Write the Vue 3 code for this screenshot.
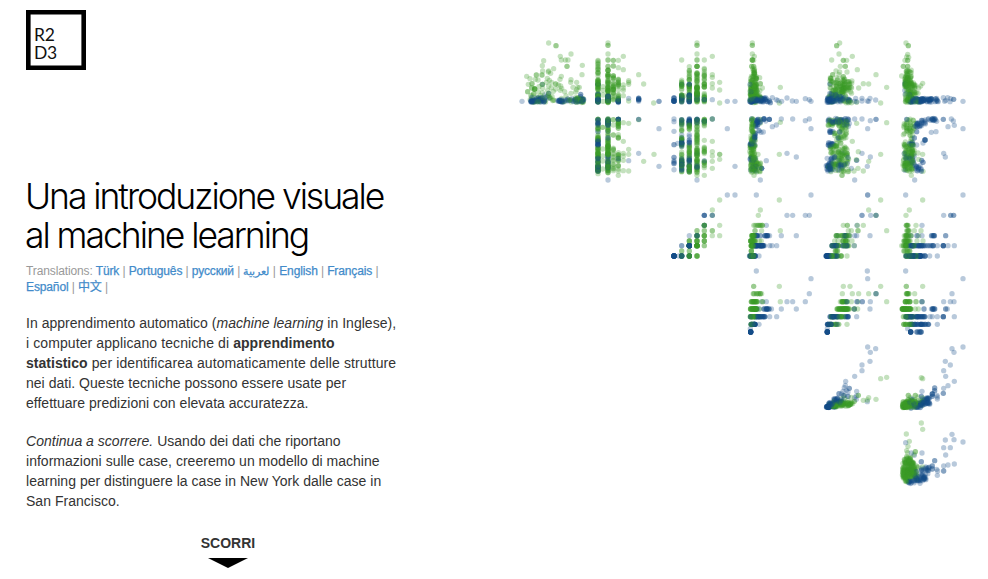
<script setup>
// Each plot lists its dots in thirds of a pixel, relative to the origin.
const plots = [
  // row 1
  { o: [510, 30], g: '116,39 138,47,2 183,72 151,79 154,90 166,90 174,90 171,109,2 101,92 97,107 217,106 216,134 116,123 122,130 131,116 115,126 98,123 79,135,2 96,135,2 154,139 150,148 50,139 60,146 76,148 84,150 112,145 118,151 109,157 125,157 183,149 182,157 200,157 66,161,3 55,163 97,163,3 87,170 98,174 116,168 124,173 137,162,2 145,165 152,168 155,175 74,177,5 65,174,2 53,185,2 113,181 116,190,2 130,184 137,177 151,181 164,185 189,172 203,172 208,172 200,179 197,186 183,190 168,198 71,191,2 85,186 97,188 92,196 126,199 62:140:194:206:9 60:135:209:217:12 195:222:203:218:22 150:190:205:218:5',
    b: '36,214 97,163 116,190 104,195 108,201 117,204 61:73:211:216:15 68:106:202:216:26 142:160:209:216:15 162:190:205:215:9 194:222:206:216:24 212,193,2 212,200,2 173,207 66,202 96,204,2' },
  { o: [510, 30], g: '294,39 294,46,3 294,72 294,90,2 294,109,3 264:264:90:140:12 264:264:145:182:20 264:264:188:218:14 294:294:115:165:18 294:294:168:218:40 279,181 279,170 279,195 279,214 310,91,2 310,108,3 310:310:128:216:22 325,91 325,113 325:325:130:215:16 340,79 340,119 340,165 340,174 340,181 340,197 356,152 356,157 356,163 356,213 386,134 401,162 431,219',
    b: '264,163,4 264:264:187:196:4 264:264:206:216:18 294:294:196:215:23 325:325:204:218:14 356,205 386:386:203:211:6 386,214 447,214,3' },
  { o: [660, 30], g: '65,90 65:65:148:180:10 65:65:190:216:12 88,110 88:88:121:155:9 88:88:162:216:20 111,39 111,46,3 111,72 111,90,2 111,109,5 111:111:124:158:12 111:111:161:218:40 133,90 133:133:115:156:9 133:133:160:174:8 133:133:186:218:10 157,79 157,134 157,142 157,161 157,174 179,157 179,180 179,219 72,197',
    b: '42:42:202:206:3 42,213,10 65,163,3 65:65:197:216:18 88,163,4 88:88:194:217:24 111:111:201:215:6 133:133:204:210:4 157,209 202,214 225,214' },
  { o: [660, 30], g: '277,39 277,46,3 277,72 283,79 277,90,4 281,91 275,109,3 281,109,3 278:284:115:140:12 270:290:137:170:26 299,143 301,161,2 307,174 361,172 358,219 270:292:165:218:68 292:302:180:218:9 269:288:190:206:14',
    b: '270,163 273,185 277,190 269:278:208:217:19 276:312:205:215:27 299:321:202:217:18 323,215,2 328,213,3 331,218,2 337,203 349,209 354,212 365,214 381,204 397,213 409,214 436,206 448,209 453,214' },
  { o: [815, 30], g: '74,39 65,47,2 72,72 112,79 50,90 85,91,2 95,91 76,109 91,109,3 127,119 63,123 74,126 96,126 53,134,2 72,134 85,140,3 183,134 46,143 45,151 145,161 161,162 215,172 131,174 197,219 45:89:143:182:38 80:111:152:174:14 77:112:171:194:18 42:93:181:216:37 89:110:210:219:5 125,217',
    b: '45,162,3 44,190 50,190 35:55:203:217:34 53:91:197:216:25 92:106:207:216:8 119,214 122,205 125,215 141,205 141,213 157,213 161,214 165,205 182,210 45:64:187:204:8' },
  { o: [815, 30], g: '273,39 280,47,3 278,73 275,81 281,82 270,91 278,91,2 265,109,2 278,109,2 273:290:119:143:16 270:292:139:171:32 269:301:155:196:46 260,138 323,160 317,168 311,174 304,188 309,190 269:293:199:218:28 293:322:207:220:7',
    b: '270,162,2 269,181 271,192 284,194 283:305:205:217:24 304:329:205:216:35 332:351:206:216:18 356:370:204:216:7 385,203 398,203 389,214 392,211 405,215 407,206 416,208,2 444,214' },
  // row 2
  { o: [510, 30], g: '264:264:267:302:11 264:264:310:351:11 264:264:354:383:19 264:264:386:426:23 264,431 278,292,3 278,357 278,378 278,393 278,417 294:294:265:309:16 294:294:311:352:19 294:294:354:378:19 294:294:379:429:21 310,269,3 310,285 310,315,2 310:310:354:394:8 310:310:400:423:5 325:325:267:308:11 325:325:312:328:4 325:325:367:396:8 325:325:406:425:4 325,436 340,278 340,334 340,370 340,378 340,391 340,422 356,280 356,358 356,373 356,423 386,269 401,394 432,373',
    b: '264:264:267:286:8 264,305,3 264:264:332:350:12 264:264:379:398:7 264:264:406:424:12 294:294:266:287:18 294,304,2 294,324,2 294:294:375:425:15 294,450 325,268,8 325,386,3 356,392 386,268,3 386,370 447,296 447,409' },
  { o: [660, 30], g: '65:65:265:305:11 65:65:315:351:11 65:65:365:427:22 88:88:276:300:8 88:88:342:385:13 88:88:386:429:15 111:111:267:301:12 111:111:302:351:14 111:111:352:390:18 111:111:391:429:15 111,436 133:133:267:290:9 133,331 133:133:351:371:7 133:133:391:424:7 133,436 157,267 157,334 157,365 157,378 157,394 157,415 179,373,3 179,388',
    b: '42,267 42,275 42,304 42,344,2 42,382,2 42:42:391:422:5 53,340 65:65:266:288:5 65,315 65:65:329:350:14 65:65:380:424:18 88:88:266:287:20 88:88:299:345:7 88:88:375:426:17 111:111:267:282:6 111,370 111:111:401:421:5 111,450 133:133:268:279:5 133,392 157,267,2 202,296 225,409' },
  { o: [660, 30], g: '274:281:266:305:18 273:286:304:350:24 269:284:346:383:27 272:290:381:427:39 301,268 301,279 361,277 358,373 294,373 298,403 300,425 282,436 292:303:385:424:7',
    b: '275,267,2 285:294:268:290:17 292:303:267:278:5 312,267,5 328,268,4 317,273 297,302,2 303,307 310,306 283:287:304:334:9 270:284:338:346:12 270:287:380:396:8 270:291:405:425:15 305,415,4 319,392 301,450 337,290 349,285 364,267 398,267 381,370 409,381 436,272 448,267 453,296' },
  { o: [815, 30], g: '39:60:268:287:12 58:102:266:291:21 125,280 215,278 78:99:292:325:12 54:80:302:349:16 45:70:346:373:17 65:98:350:378:23 55:101:379:402:20 38:102:398:426:27 81,436,2 112,334 130,365 124,389 197,373 161,394 117,423 129,415 145,423',
    b: '38:55:267:280:9 57:87:265:280:14 84:104:266:289:12 119,267 141,267 166,272 183,268,3 158,296 40:56:302:309:6 74,306,2 70,324,2 39:57:338:347:11 35:60:380:402:12 33:48:405:424:18 48:91:403:420:12 73,391 83,370 99,382 97,401 109,415 141,370 166,381 125,391,2 157,409 119,450' },
  { o: [815, 30], g: '265:277:278:316:9 275:300:267:310:20 284:293:312:348:10 260:277:333:351:5 266:300:341:383:32 264:293:371:424:50 303,280 309,369 323,373 289,436 311,388 324,424 295,398',
    b: '275,268,2 307,278 300:320:280:291:12 319:331:268:285:8 338:363:265:272:12 365,274 385,268,3 409,267 415,273 418,286 399,290 444,296 305,305,3 349,307 363,305 298,324,2 330,330,5 324,339 281:295:337:347:7 305,345 268,370 386,370 391,381 269:300:377:403:12 320,391,2 324,397,2 270,421 300:322:406:425:13 299,450' },
  // row 3
  { o: [660, 185], g: '65,198,3 65,213,4 88,168,4 88,182,6 88,198,3 88,213,9 111,137,2 111,152,5 111,168,6 111,182,16 111,213,5 133,121,5 133,137,2 133,152,5 133,168,4 133,182,3 157,75 157,91 157,137,2 157,152 179,45 179,121 179,152',
    b: '42,213,18 57,213 65,182,3 65,213,9 88,152 88,182,19 88,213,4 111,152,4 133,91,4 133,121,2 157,91,2 202,30 225,30' },
  { o: [660, 185], g: '358,45 301,75 295,91 279:310:121:121:9 285,137,3 305,137 361,137 274:284:152:152:15 272:287:168:168:16 298,168 304,168 273:282:182:182:19 274,198,4 270:282:213:213:16',
    b: '289,30 453,30 381,91 398,91 436,91 448,91 319,121 288:304:152:152:7 314:329:152:152:9 364,152 409,152 283:302:182:182:22 302:314:182:182:13 329,182 336,182 350,182 268:287:213:213:17 297,213' },
  { o: [815, 185], g: '197,45 161,75 183,91 85,121 97,121,2 127,121 145,121 100,137 109,137 129,137,2 215,137 63:105:152:152:14 59,168 69,168 82:98:168:168:9 111,168 48:74:182:182:10 78:104:182:182:8 118,182 58:71:198:198:5 45:80:213:213:15 96,213',
    b: '158,30,3 141,91,3 167,91 183,91,2 126,121 66,152 87:95:152:152:7 104,152 119,152 125,152 165,152 48:66:182:182:14 82:98:182:182:9 118,182 33:43:213:213:25 45:70:213:213:10' },
  { o: [815, 185], g: '323,45 283,75 273,91 273:281:121:121:5 303,121 274:283:137:137:5 298,137 318,137 265:289:152:152:10 311,152 263:286:168:168:13 306,168 324,168 260:278:182:182:13 278:300:182:182:7 265:286:198:198:7 266:307:213:213:18',
    b: '272,30 444,30 386,91 407,91,2 416,91,2 321,121 288,152 306,152,2 321,152 349:360:152:152:6 392,152,3 282:321:182:182:23 323:355:182:182:11 367,182 385,182,5 399,182 418,182 269:329:213:213:34 316,213,6 330,213,4 344,213 367,213' },
  // row 4
  { o: [660, 185], g: '358,304 281,304,3 276:306:326:326:9 274:292:350:350:17 308,350,2 361,350 271:292:372:372:30 298,372 270:286:395:395:15 297,395 272:281:418:418:9',
    b: '289,258 453,281 448,326 381,350 398,350 436,350 305,350 319,350 291,372 298,372 312:337:372:372:11 364,372 409,372 272,395,2 284:316:395:395:23 329,395 350,395 272:286:418:418:19 297,418 271,431 272,441,15' },
  { o: [815, 185], g: '85,304 105,304 197,304 82,326 112,326 131,326 161,326 183,326 72:98:350:350:12 109,350 129,350 215,350 65:105:372:372:36 118,372,2 128,372 45:90:395:395:17 41:72:418:418:10 96,418',
    b: '157,258 158,281 183,326,2 95,350,2 126,350,2 142,350,3 166,350 118,372,3 165,372 44:70:395:395:19 71:101:395:395:9 125,395 37:50:418:418:17 66,418,2 37,431 37,441,14' },
  { o: [815, 185], g: '274,304,3 323,304 271:284:326:326:6 299,326 266:287:350:350:11 303,350,2 321,350 261:291:372:372:34 301,372 310,372 264:294:395:395:16 303,395 266:294:418:418:13',
    b: '272,258 444,281 411,326 321,350,3 386,350 406,350 417,350 327,372,3 349:361:372:372:7 392,372,2 397,372 271:300:395:395:18 302:332:395:395:18 345,395 352,395 367,395 385,395,4 418,395 280:328:418:418:25 329:345:418:418:6 367,418 278,431 287,441,9 304:320:441:441:8' },
  // row 5
  { o: [815, 335], g: '215,127 197,131 130,181,3 161,188 145,196 157,195 183,193 109,187 86,182 118,199,3 43:64:208:216:18 55:82:199:215:23 73:101:196:214:27 95:113:201:211:12 89,190 78,192',
    b: '158,36 182,41 166,52 165,79 141,90 141,107 119,124 92,139 91,151 88,158 103,160,3 94,166 99,171 84,169 125,169 72,176,3 80,177 87,182,3 99,184,2 124,183 119,188 124,193 157,200 34:44:214:218:27 40:60:202:216:35 56:70:189:203:15 69:88:192:205:5' },
  { o: [815, 335], g: '319,128 323,131 280,181,2 301,181,2 309,186 323,189 286,187 270:300:193:208:24 264:304:200:218:40 262:285:207:217:36 307:325:194:213:8',
    b: '444,36 411,41 417,52 391,79 406,90 386,107 392,124 418,139 399,152 386,160 359,159,3 359,167,2 321,169 385,175,3 352,177,4 352,184,2 366,181 367,192 289,191 293,193 319,184,3 321:345:187:208:22 279:320:203:218:24 288,219,2 304:332:201:211:17 367,186' },
  // row 6
  { o: [815, 335], g: '319,264 323,283 274,297 283,319 279,334 278,353 301,350,3 297,358 275,364 268,373 285,370 323,396 275,347 267:291:367:390:24 263:298:381:425:78 262:286:399:430:38 294:308:391:434:13 269:287:425:441:9 309,396',
    b: '411,298 417,314 391,315 444,321 272,323 386,338 406,338 321,354 392,360 289,354 298,361 359,377,3 319,380,3 386,393 399,390 418,387 386,408,3 352,393,3 352,402,2 365,403 368,408 367,421 316:345:394:434:23 298:330:421:440:23 279:300:436:447:14 315,445 303,410,2' },
]

let state = 20153
function random() {
  state = (state * 1664525 + 1013904223) % 4294967296
  return state / 4294967296
}

function expand(spec, color) {
  const dots = []
  for (const token of spec.split(' ')) {
    if (token.includes(':')) {
      const [x0, x1, y0, y1, n] = token.split(':').map(Number)
      const total = Math.round(n * 1.25)
      for (let i = 0; i < total; i++) {
        dots.push({ x: x0 + (x1 - x0) * random(), y: y0 + (y1 - y0) * random(), color })
      }
    } else {
      const [x, y, n = 1] = token.split(',').map(Number)
      const total = n === 3 ? 2 : n
      for (let i = 0; i < total; i++) dots.push({ x, y, color })
    }
  }
  return dots
}

const dots = plots.flatMap((plot) => {
  const mixed = [...expand(plot.g, 'green'), ...expand(plot.b, 'blue')]
  for (let i = mixed.length - 1; i > 0; i--) {
    const j = Math.floor(random() * (i + 1))
    ;[mixed[i], mixed[j]] = [mixed[j], mixed[i]]
  }
  return mixed.map((d) => ({
    x: (plot.o[0] - 500 + d.x / 3).toFixed(2),
    y: (plot.o[1] + d.y / 3).toFixed(2),
    color: d.color,
  }))
})

const languages = ['Türk', 'Português', 'русский', 'لعربية', 'English', 'Français', 'Español', '中文']
</script>

<template>
  <main class="page">
    <section class="intro">
      <a class="logo"><span>R2</span><span>D3</span></a>
      <h1>Una introduzione visuale<br />al machine learning</h1>
      <p class="translations">
        Translations:
        <template v-for="(name, i) in languages" :key="name"><a :class="{ arabic: i === 3 }">{{ name }}</a> | <br v-if="i === 5" /></template>
      </p>
      <p class="copy">
        In apprendimento automatico (<em>machine learning</em> in Inglese),<br />
        <span class="loose">i computer applicano tecniche di </span><strong>apprendimento<br />
        statistico</strong><span class="loose"> per identificarea automaticamente delle strutture</span><br />
        nei dati. Queste tecniche possono essere usate per<br />
        effettuare predizioni con elevata accuratezza.
      </p>
      <p class="copy">
        <em>Continua a scorrere.</em> Usando dei dati che riportano<br />
        informazioni sulle case, creeremo un modello di machine<br />
        learning per distinguere la case in New York dalle case in<br />
        San Francisco.
      </p>
      <div class="scroll">
        <strong>SCORRI</strong>
        <svg width="40" height="10" viewBox="0 0 40 10"><path d="M0 0H40L20 10Z" /></svg>
      </div>
    </section>
    <svg class="matrix" width="488" height="579" viewBox="0 0 488 579">
      <circle v-for="(d, i) in dots" :key="i" :class="d.color" :cx="d.x" :cy="d.y" r="2.65" />
    </svg>
  </main>
</template>

<style>
body {
  background: #fff;
}
</style>

<style scoped>
.page {
  display: flex;
  width: 988px;
  height: 579px;
  overflow: hidden;
  font-family: "Liberation Sans", "Noto Sans CJK SC", sans-serif;
  color: #333;
}
.intro {
  box-sizing: border-box;
  width: 500px;
  padding: 10px 0 0 26px;
}
.logo {
  display: flex;
  flex-direction: column;
  box-sizing: border-box;
  width: 60px;
  height: 60px;
  padding: 12px 0 0 4px;
  border: 4px solid #000;
  box-shadow: inset 0 0 0 0.6px #000;
  font: 400 17.5px/18px Lato, sans-serif;
  letter-spacing: -0.3px;
  color: #111;
}
h1 {
  margin: 107px 0 0 -1px;
  font: 300 35.5px/39px Inter, "Liberation Sans", sans-serif;
  letter-spacing: -2.05px;
  color: #000;
  white-space: nowrap;
}
.translations {
  margin: 8px 0 0;
  font-size: 12px;
  line-height: 16px;
  letter-spacing: -0.12px;
  color: #999;
  white-space: nowrap;
}
.translations a {
  color: #428bca;
  -webkit-text-stroke: 0.25px #428bca;
}
.translations .arabic {
  font-size: 10.5px;
  line-height: 1;
}
.copy {
  margin: 18px 0 0;
  font-size: 14px;
  line-height: 20px;
  letter-spacing: 0.02px;
  white-space: nowrap;
}
.loose {
  letter-spacing: 0.1px;
}
.scroll {
  display: flex;
  flex-direction: column;
  align-items: center;
  width: 404px;
  margin-top: 22px;
  font-size: 14px;
  line-height: 20px;
}
.scroll svg {
  margin-top: 5px;
}
.matrix {
  flex: none;
}
.green {
  fill: #3d9b28;
  fill-opacity: 0.3;
}
.blue {
  fill: #144b87;
  fill-opacity: 0.3;
}
</style>
